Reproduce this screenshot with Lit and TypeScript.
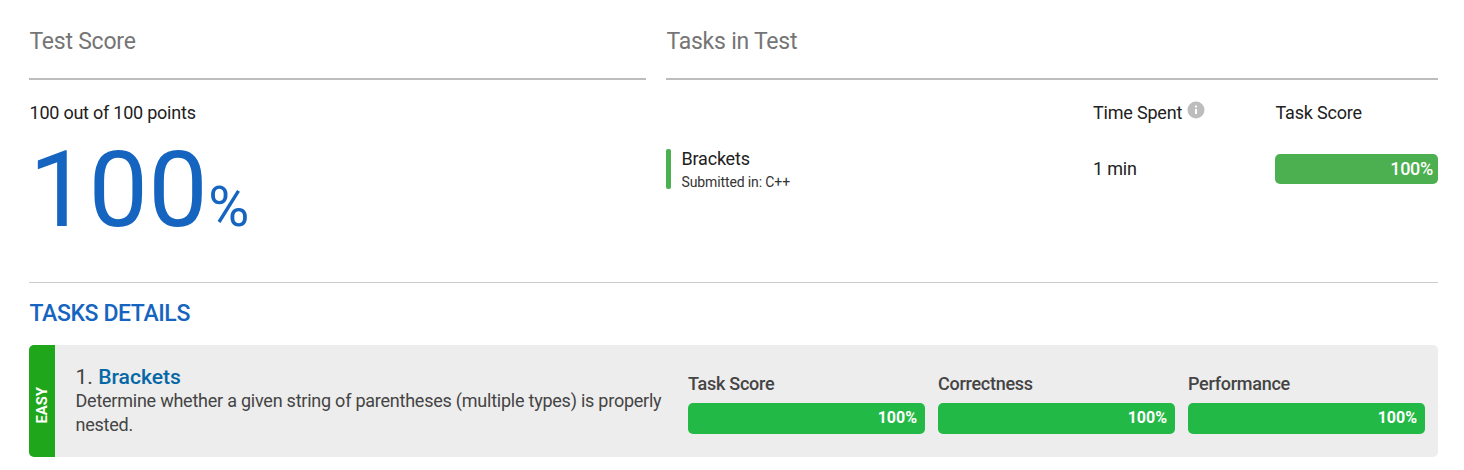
import { LitElement, html, css } from "lit";
import { customElement, property } from "lit/decorators.js";

@customElement("score-bar")
class ScoreBar extends LitElement {
  @property({ type: Number }) value = 0;

  static styles = css`
    :host { display: block; }
    .fill {
      display: flex;
      align-items: center;
      justify-content: flex-end;
      box-sizing: border-box;
      height: var(--bar-height, 31px);
      padding-right: var(--bar-pad, 8px);
      border-radius: 5px;
      background: var(--bar-color, #22b946);
      color: #fff;
      font-size: var(--bar-font, 16px);
      font-weight: var(--bar-weight, 700);
      letter-spacing: var(--bar-spacing, 0);
      line-height: 1;
    }
    .label { padding-bottom: var(--bar-lift, 2px); }
  `;

  render() {
    return html`<div class="fill" style="width:${this.value}%"><span class="label">${this.value}%</span></div>`;
  }
}

const metrics = [
  { name: "Task Score", value: 100 },
  { name: "Correctness", value: 100 },
  { name: "Performance", value: 100 },
];

@customElement("app-root")
class AppRoot extends LitElement {
  static styles = css`
    :host {
      display: block;
      box-sizing: border-box;
      height: 470px;
      padding: 0 26px 0 29px;
      background: #fff;
      color: #212121;
      font-family: Roboto, "Liberation Sans", sans-serif;
      overflow: hidden;
    }
    .summary {
      display: grid;
      grid-template-columns: 617px 772px;
      column-gap: 20px;
      height: 282px;
      border-bottom: 1px solid #ccc;
    }
    .title {
      box-sizing: border-box;
      height: 80px;
      margin: 0;
      padding: 28px 0 0 0.5px;
      border-bottom: 2px solid #bdbdbd;
      color: #757575;
      font-size: 23px;
      font-weight: 400;
      letter-spacing: -0.24px;
      line-height: 28px;
    }
    .points { padding: 22px 0 0 0.5px; font-size: 18px; letter-spacing: -0.23px; line-height: 22px; }
    .total {
      display: flex;
      align-items: baseline;
      margin-top: 6px;
      color: #1565c0;
      font-size: 106px;
      line-height: 120px;
    }
    .percent { margin-left: 0.5px; font-size: 56px; line-height: 1; }
    .table { display: grid; grid-template-columns: 427px 182px 163px; font-size: 18px; letter-spacing: -0.2px; }
    .head { display: flex; padding-top: 22px; line-height: 22px; }
    .head-score { padding-left: 0.5px; }
    .info { width: 18px; height: 18px; margin: -1px 0 0 5px; }
    .task {
      height: 40px;
      margin-top: 25px;
      display: flex;
      gap: 10.5px;
    }
    .stripe { width: 5px; height: 40px; border-radius: 2px; background: #4caf50; }
    .name { line-height: 20px; }
    .lang { font-size: 14px; letter-spacing: -0.12px; line-height: 20px; padding-top: 3px; color: #333; }
    .time { padding-top: 34px; line-height: 22px; }
    .table score-bar {
      margin-top: 30px;
      --bar-height: 30px;
      --bar-pad: 5px;
      --bar-color: #4caf50;
      --bar-font: 18px;
      --bar-weight: 500;
      --bar-spacing: -0.3px;
      --bar-lift: 0px;
    }
    .heading {
      margin: 0;
      padding: 17px 0 17px 0.5px;
      color: #1565c0;
      font-size: 23px;
      font-weight: 500;
      letter-spacing: -0.4px;
      line-height: 28px;
    }
    .card {
      display: flex;
      height: 112px;
      border-radius: 5px;
      background: #ededed;
      color: #444;
      overflow: hidden;
    }
    .level {
      display: flex;
      align-items: center;
      width: 26px;
      background: #1fa61a;
      color: #fff;
      font-size: 14.8px;
      font-weight: 700;
      line-height: 26px;
    }
    .level-text { writing-mode: vertical-rl; transform: rotate(180deg); margin-top: 8px; }
    .description { width: 633px; box-sizing: border-box; padding: 20px 20px 0 20.5px; }
    .question { font-size: 21.1px; line-height: 24px; }
    .link { color: #0568a6; font-weight: 500; text-decoration: none; }
    .text { font-size: 18px; letter-spacing: -0.235px; line-height: 24px; white-space: nowrap; }
    .metrics { display: grid; grid-template-columns: repeat(3, 237px); column-gap: 13px; padding-top: 27px; }
    .metric-name { height: 31px; font-size: 18px; font-weight: 500; letter-spacing: -0.27px; line-height: 24px; }
  `;

  render() {
    return html`
      <section class="summary">
        <div>
          <h2 class="title">Test Score</h2>
          <div class="points">100 out of 100 points</div>
          <div class="total"><span>100</span><span class="percent">%</span></div>
        </div>
        <div>
          <h2 class="title">Tasks in Test</h2>
          <div class="table">
            <div class="head"></div>
            <div class="head">
              <span>Time Spent</span>
              <svg class="info" viewBox="0 0 18 18">
                <circle cx="9" cy="9" r="8.5" fill="#bdbdbd" />
                <path d="M8 4.5h2v2H8zM8 8h2v5H8z" fill="#fff" />
              </svg>
            </div>
            <div class="head head-score">Task Score</div>
            <div class="task">
              <div class="stripe"></div>
              <div>
                <div class="name">Brackets</div>
                <div class="lang">Submitted in: C++</div>
              </div>
            </div>
            <div class="time">1 min</div>
            <score-bar .value=${100}></score-bar>
          </div>
        </div>
      </section>
      <h2 class="heading">TASKS DETAILS</h2>
      <section class="card">
        <div class="level"><span class="level-text">EASY</span></div>
        <div class="description">
          <div class="question">1. <a class="link">Brackets</a></div>
          <div class="text">Determine whether a given string of parentheses (multiple types) is properly<br />nested.</div>
        </div>
        <div class="metrics">
          ${metrics.map((m) => html`<div><div class="metric-name">${m.name}</div><score-bar .value=${m.value}></score-bar></div>`)}
        </div>
      </section>
    `;
  }
}
